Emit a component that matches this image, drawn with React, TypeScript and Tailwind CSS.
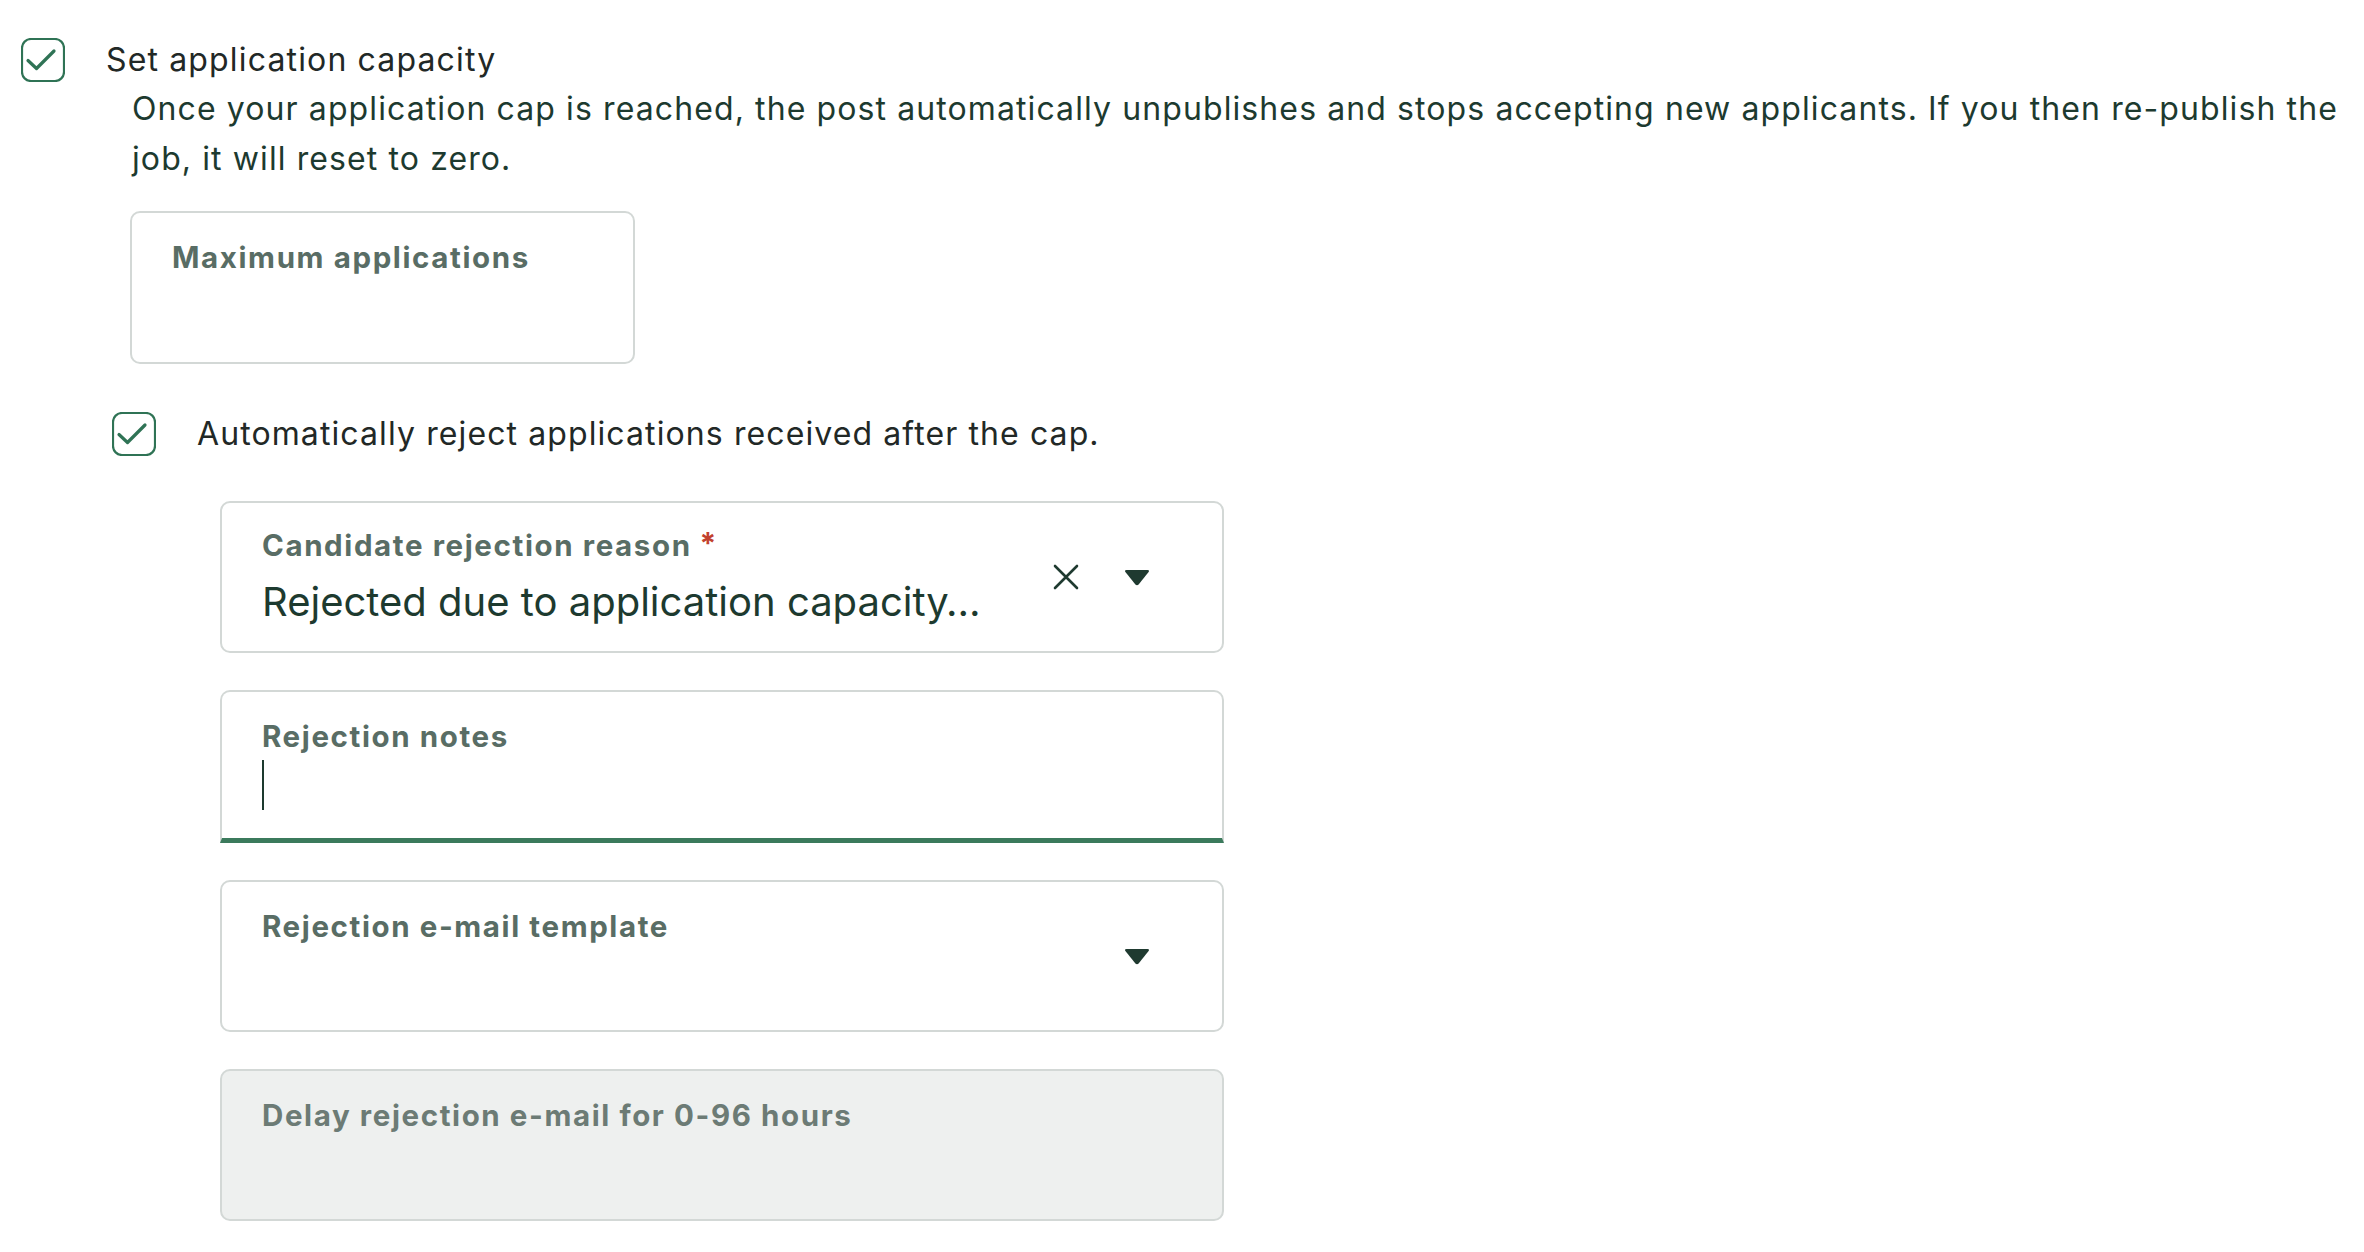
import React from "react";

function CheckBox() {
  return (
    <svg width="44" height="44" viewBox="0 0 44 44" className="shrink-0">
      <rect x="1" y="1" width="42" height="42" rx="9" fill="white" stroke="#2f7355" strokeWidth="2.2" />
      <path d="M7 22.5 L15.5 30.5 L33 13" fill="none" stroke="#2f7355" strokeWidth="3.2" strokeLinecap="round" strokeLinejoin="round" />
    </svg>
  );
}

function Caret() {
  return (
    <svg width="26" height="17" viewBox="0 0 26 17">
      <path d="M2.5 1 H23.5 Q25.8 1 24.6 3 L14.6 15.4 Q13 17 11.4 15.4 L1.4 3 Q0.2 1 2.5 1 Z" fill="#1f3a30" />
    </svg>
  );
}

function Clear() {
  return (
    <svg width="26" height="26" viewBox="0 0 26 26">
      <path d="M2 2 L24 24 M24 2 L2 24" stroke="#1f3a30" strokeWidth="2.6" strokeLinecap="round" />
    </svg>
  );
}

function Label({ children }: { children: React.ReactNode }) {
  return (
    <div className="text-[29.5px] leading-[34px] font-bold text-[#596d65] tracking-[1.6px]">
      {children}
    </div>
  );
}

export default function App() {
  return (
    <div className="min-h-screen bg-white pl-[21px] pt-[38px] font-['Inter','Noto_Sans',sans-serif]">
      {/* Capacity toggle */}
      <div className="flex items-center gap-[41px]">
        <CheckBox />
        <span className="text-[32px] leading-[44px] tracking-[1.15px] text-[#222826]">
          Set application capacity
        </span>
      </div>
      <p className="ml-[111px] pr-[10px] pt-[2px] text-[32px] leading-[50px] tracking-[1.1px] text-[#1d3a2f]">
        Once your application cap is reached, the post automatically unpublishes and stops
        accepting new applicants. If you then re-publish the job, it will reset to zero.
      </p>

      <div className="ml-[109px] mt-[27px] h-[153px] w-[505px] rounded-[10px] border-2 border-[#d3d8d6] pl-[40px] pt-[27px]">
        <Label>Maximum applications</Label>
      </div>

      {/* Auto reject */}
      <div className="ml-[91px] mt-[48px] flex items-center gap-[41px]">
        <CheckBox />
        <span className="text-[32px] leading-[44px] tracking-[1.1px] text-[#222826]">
          Automatically reject applications received after the cap.
        </span>
      </div>

      <div className="ml-[199px] mt-[45px] flex w-[1004px] flex-col gap-[37px]">
        <div className="flex h-[152px] items-center rounded-[10px] border-2 border-[#d3d8d6] pl-[40px] pr-[72px]">
          <div className="flex-1">
            <div className="flex items-start">
              <Label>Candidate rejection reason</Label>
              <span className="ml-[8px] text-[30px] leading-[30px] font-bold text-[#c2412e]">*</span>
            </div>
            <div className="mt-[16px] text-[40px] leading-[48px] text-[#1d3a2f]">
              Rejected due to application capacity…
            </div>
          </div>
          <div className="flex items-center gap-[45px]">
            <Clear />
            <Caret />
          </div>
        </div>

        <div className="h-[153px] rounded-t-[10px] border-2 border-b-[5px] border-[#d3d8d6] border-b-[#3b7a5c] pl-[40px] pt-[27px]">
          <Label>Rejection notes</Label>
          <div className="mt-[7px] h-[50px] w-[2px] bg-[#1d3a2f]" />
        </div>

        <div className="flex h-[152px] rounded-[10px] border-2 border-[#d3d8d6] pl-[40px] pr-[72px] pt-[27px]">
          <div className="flex-1">
            <Label>Rejection e-mail template</Label>
          </div>
          <div className="flex items-center pb-[27px]">
            <Caret />
          </div>
        </div>

        <div className="h-[152px] rounded-[10px] border-2 border-[#d3d8d6] bg-[#eef0ef] pl-[40px] pt-[27px]">
          <div className="text-[29.5px] leading-[34px] font-bold tracking-[1.6px] text-[#6c7b75]">
            Delay rejection e-mail for 0-96 hours
          </div>
        </div>
      </div>
    </div>
  );
}
